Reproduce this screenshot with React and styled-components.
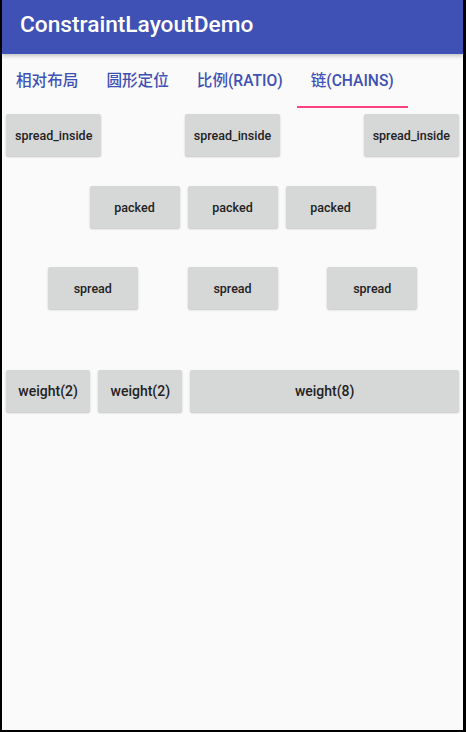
import React from "react";
import styled, { createGlobalStyle } from "styled-components";

const GlobalStyle = createGlobalStyle`
  html, body {
    margin: 0;
    padding: 0;
    background: #000;
  }
  body {
    font-family: Roboto, "Noto Sans CJK SC", sans-serif;
  }
`;

const tabs = ["相对布局", "圆形定位", "比例(RATIO)", "链(CHAINS)"];

export default function App() {
  return (
    <>
      <GlobalStyle />
      <Screen>
        <AppBar>ConstraintLayoutDemo</AppBar>
        <TabBar>
          {tabs.map((t, i) => (
            <Tab key={t} active={i === 3}>
              {t}
            </Tab>
          ))}
        </TabBar>
        <Content>
          <Chain mode="space-between" top={6}>
            <Btn>spread_inside</Btn>
            <Btn>spread_inside</Btn>
            <Btn>spread_inside</Btn>
          </Chain>
          <Chain mode="center" top={30}>
            <Btn>packed</Btn>
            <Btn>packed</Btn>
            <Btn>packed</Btn>
          </Chain>
          <Chain mode="space-evenly" top={39}>
            <Btn>spread</Btn>
            <Btn>spread</Btn>
            <Btn>spread</Btn>
          </Chain>
          <WeightChain>
            <Btn big>weight(2)</Btn>
            <Btn big>weight(2)</Btn>
            <Btn big>weight(8)</Btn>
          </WeightChain>
        </Content>
      </Screen>
    </>
  );
}

const Screen = styled.div`
  width: 461px;
  height: 730px;
  margin-left: 2px;
  background: #fafafa;
  display: flex;
  flex-direction: column;
  overflow: hidden;
`;

const AppBar = styled.header`
  position: relative;
  z-index: 1;
  height: 54px;
  box-sizing: border-box;
  padding: 0 0 5px 18px;
  line-height: 49px;
  background: #3f51b5;
  color: #fff;
  font-size: 22.7px;
  font-weight: 500;
  box-shadow: 0 2px 4px rgba(0, 0, 0, 0.22);
`;

const TabBar = styled.nav`
  display: flex;
  height: 54px;
`;

const Tab = styled.div`
  padding: 0 14px;
  height: 54px;
  box-sizing: border-box;
  font-size: 15.6px;
  font-weight: 500;
  color: #3f51b5;
  white-space: nowrap;
  border-bottom: 2px solid ${(p) => (p.active ? "#ff4081" : "transparent")};
  line-height: 54px;
`;

const Content = styled.main`
  display: flex;
  flex-direction: column;
`;

const Chain = styled.div`
  display: flex;
  justify-content: ${(p) => p.mode};
  margin-top: ${(p) => p.top}px;
`;

const WeightChain = styled.div`
  display: grid;
  grid-template-columns: 1fr 1fr 3fr;
  margin-top: 61px;
`;

const Btn = styled.button`
  margin: 0 4px;
  height: 42px;
  min-width: ${(p) => (p.big ? 0 : 90)}px;
  padding: 0 9px;
  border: none;
  border-radius: 2px;
  background: #d6d7d7;
  box-shadow: 0 1px 2px rgba(0, 0, 0, 0.22);
  font-family: Roboto, sans-serif;
  font-size: ${(p) => (p.big ? 14 : 12.5)}px;
  font-weight: 500;
  color: #222;
`;
